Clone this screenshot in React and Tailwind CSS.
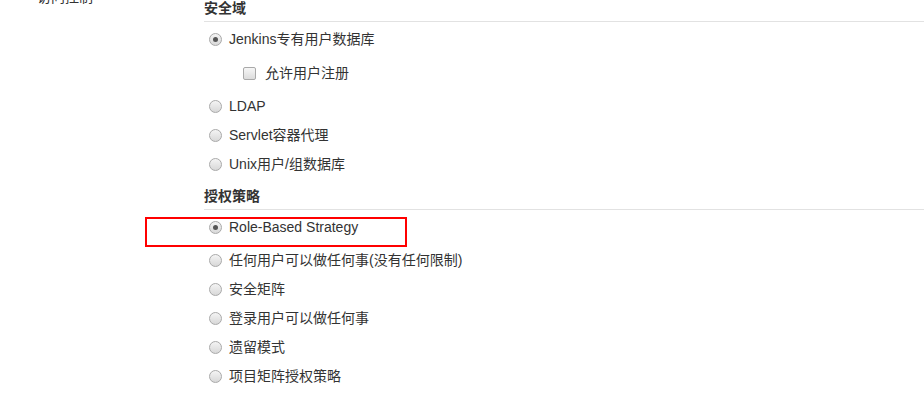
const font = { fontFamily: '"Liberation Sans", Arial, "Noto Sans CJK SC", sans-serif' }

function Radio({ checked }) {
  return (
    <span className="w-[13px] h-[13px] rounded-full border border-[#a9a9a9] bg-gradient-to-b from-[#f4f4f4] to-[#d8d8d8] flex items-center justify-center shrink-0">
      {checked && <span className="w-[5px] h-[5px] rounded-full bg-[#555]" />}
    </span>
  )
}

function Checkbox() {
  return (
    <span className="w-[13px] h-[13px] rounded-[2px] border border-[#a9a9a9] bg-gradient-to-b from-[#f6f6f6] to-[#dcdcdc] shrink-0" />
  )
}

function RadioRow({ label, checked, className = '' }) {
  return (
    <div className={`h-[29px] flex items-center pl-[5px] ${className}`}>
      <Radio checked={checked} />
      <span className="ml-[7px]">{label}</span>
    </div>
  )
}

function SectionHeader({ title, className = '' }) {
  return (
    <div className={`h-[22px] border-b border-[#e2e2e2] ${className}`}>
      <div className="font-bold text-[14px] leading-[17px] text-[#333]">{title}</div>
    </div>
  )
}

export default function App() {
  const strategies = [
    '任何用户可以做任何事(没有任何限制)',
    '安全矩阵',
    '登录用户可以做任何事',
    '遗留模式',
    '项目矩阵授权策略',
  ]

  return (
    <div className="w-[924px] h-[408px] bg-white overflow-hidden text-[14px] leading-[17px] text-[#333]" style={font}>
      <div className="flex">
        <div className="w-[204px] shrink-0 pl-[37px]">
          <div className="-mt-[11px]">访问控制</div>
        </div>
        <div className="flex-1">
          <SectionHeader title="安全域" />
          <RadioRow label="Jenkins专有用户数据库" checked className="mt-[3px]" />
          <div className="h-[29px] flex items-center pl-[39px] mt-[5px]">
            <Checkbox />
            <span className="ml-[9px]">允许用户注册</span>
          </div>
          <RadioRow label="LDAP" className="mt-[4px]" />
          <RadioRow label="Servlet容器代理" />
          <RadioRow label="Unix用户/组数据库" />

          <SectionHeader title="授权策略" className="mt-[9px]" />
          <div className="relative mt-[3px]">
            <RadioRow label="Role-Based Strategy" checked />
            <div className="absolute left-[-59px] top-[4px] w-[262px] h-[30px] border-2 border-[#ff0000]" />
          </div>
          <div className="mt-[4px]">
            {strategies.map((s) => (
              <RadioRow key={s} label={s} />
            ))}
          </div>
        </div>
      </div>
    </div>
  )
}
